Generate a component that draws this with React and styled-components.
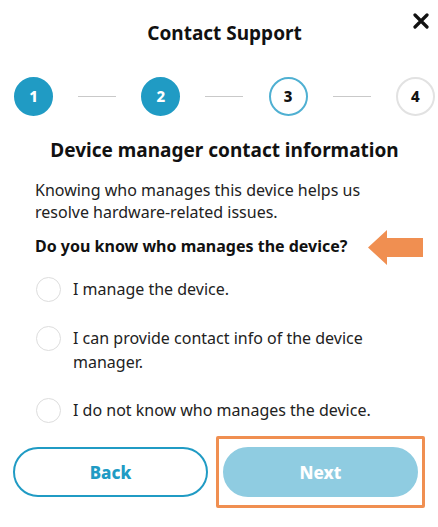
import React from "react";
import styled, { createGlobalStyle } from "styled-components";

const GlobalStyle = createGlobalStyle`
  body {
    margin: 0;
    background: #fff;
    font-family: "Noto Sans", "Open Sans", sans-serif;
    color: #111;
  }
`;

const BLUE = "#209bc4";
const ORANGE = "#f08f51";

const PanelSC = styled.div`
  position: relative;
  width: 438px;
  height: 527px;
  box-sizing: border-box;
  padding: 0 3px 0 14px;
`;

const HeaderSC = styled.div`
  position: relative;
  display: flex;
  justify-content: center;
  align-items: center;
  height: 66px;
`;

const TitleSC = styled.h1`
  margin: 0;
  font-size: 19px;
  font-weight: 700;
`;

const CloseSC = styled.button`
  position: absolute;
  right: 6px;
  top: 13px;
  width: 16px;
  height: 16px;
  padding: 0;
  border: 0;
  background: none;
  cursor: pointer;
`;

const StepsSC = styled.div`
  display: flex;
  align-items: center;
  justify-content: space-between;
  margin-top: 10px;
  height: 40px;
`;

const StepSC = styled.div`
  width: 39px;
  height: 39px;
  box-sizing: border-box;
  border-radius: 50%;
  display: flex;
  align-items: center;
  justify-content: center;
  font-size: 15px;
  font-weight: 800;
  background: ${p => (p.done ? BLUE : "#fff")};
  color: ${p => (p.done ? "#fff" : "#111")};
  border: 2px solid ${p => (p.done ? BLUE : p.active ? "#4fb0d2" : "#e2e2e2")};
`;

const LineSC = styled.div`
  width: 38px;
  height: 1px;
  background: #c9c9c9;
`;

const HeadingSC = styled.h2`
  margin: 21px 0 0;
  text-align: center;
  font-size: 19px;
  font-weight: 700;
  line-height: 26px;
`;

const TextSC = styled.p`
  margin: 16px 0 0 21px;
  font-size: 16px;
  line-height: 22px;
  color: #222;
`;

const QuestionSC = styled.p`
  margin: 12px 0 0 21px;
  font-size: 16px;
  font-weight: 700;
  line-height: 22px;
`;

const OptionsSC = styled.div`
  display: flex;
  flex-direction: column;
  gap: 24px;
  margin: 20px 0 0 22px;
`;

const OptionSC = styled.label`
  display: flex;
  align-items: flex-start;
  gap: 12px;
  font-size: 16px;
  line-height: 24px;
  color: #222;
  cursor: pointer;
`;

const RadioSC = styled.span`
  flex: none;
  width: 25px;
  height: 25px;
  box-sizing: border-box;
  border: 1.5px solid #dddddd;
  border-radius: 50%;
`;

const OptionTextSC = styled.span`
  max-width: 340px;
`;

const FooterSC = styled.div`
  display: flex;
  align-items: center;
  gap: 8px;
  margin: 13px 0 0 -1px;
`;

const ButtonSC = styled.button`
  width: 195px;
  height: 50px;
  box-sizing: border-box;
  border-radius: 25px;
  font-family: inherit;
  font-size: 17px;
  font-weight: 800;
  cursor: pointer;
  border: 2px solid ${p => (p.primary ? "#8fcce1" : BLUE)};
  background: ${p => (p.primary ? "#8fcce1" : "#fff")};
  color: ${p => (p.primary ? "#fff" : BLUE)};
`;

const HighlightSC = styled.div`
  border: 3px solid ${ORANGE};
  border-radius: 2px;
  padding: 8px 4px;
`;

const ArrowSC = styled.svg`
  position: absolute;
  left: 368px;
  top: 230px;
`;

const steps = [
  { n: "1", done: true },
  { n: "2", done: true },
  { n: "3", active: true },
  { n: "4" },
];

const options = [
  "I manage the device.",
  "I can provide contact info of the device manager.",
  "I do not know who manages the device.",
];

export default function App() {
  return (
    <>
      <GlobalStyle />
      <PanelSC>
        <HeaderSC>
          <TitleSC>Contact Support</TitleSC>
          <CloseSC aria-label="Close">
            <svg width="16" height="16" viewBox="0 0 16 16">
              <path d="M2 2 L14 14 M14 2 L2 14" stroke="#111" strokeWidth="3.2" strokeLinecap="round" />
            </svg>
          </CloseSC>
        </HeaderSC>

        <StepsSC>
          {steps.map((s, i) => (
            <React.Fragment key={s.n}>
              {i > 0 && <LineSC />}
              <StepSC done={s.done} active={s.active}>{s.n}</StepSC>
            </React.Fragment>
          ))}
        </StepsSC>

        <HeadingSC>Device manager contact information</HeadingSC>
        <TextSC>
          Knowing who manages this device helps us
          <br />
          resolve hardware-related issues.
        </TextSC>
        <QuestionSC>Do you know who manages the device?</QuestionSC>

        <OptionsSC>
          {options.map(o => (
            <OptionSC key={o}>
              <RadioSC />
              <OptionTextSC>{o}</OptionTextSC>
            </OptionSC>
          ))}
        </OptionsSC>

        <FooterSC>
          <ButtonSC>Back</ButtonSC>
          <HighlightSC>
            <ButtonSC primary>Next</ButtonSC>
          </HighlightSC>
        </FooterSC>

        <ArrowSC width="56" height="36" viewBox="0 0 56 36">
          <path d="M0 17.5 L19 0 L19 8 L55 8 L55 27 L19 27 L19 35 Z" fill={ORANGE} />
        </ArrowSC>
      </PanelSC>
    </>
  );
}
